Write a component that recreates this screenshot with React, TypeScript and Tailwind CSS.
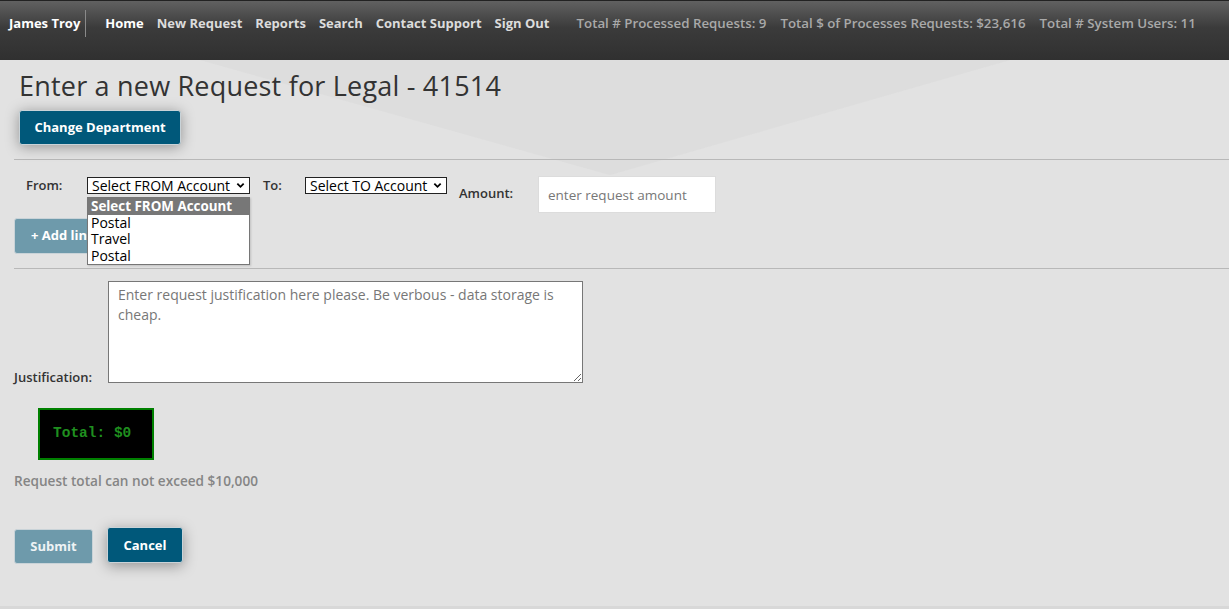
import { useState } from 'react';

const navLinks = ['New Request', 'Reports', 'Search', 'Contact Support', 'Sign Out'];
const stats = [
  'Total # Processed Requests: 9',
  'Total $ of Processes Requests: $23,616',
  'Total # System Users: 11',
];
const fromOptions = ['Postal', 'Travel', 'Postal'];

function Chevron() {
  return (
    <svg className="w-[9px] h-[9px]" viewBox="0 0 10 10" fill="none" stroke="#000" strokeWidth={2}>
      <path d="M1.5 3l3.5 3.5L8.5 3" />
    </svg>
  );
}

export default function App() {
  const [amount, setAmount] = useState('');
  const [note, setNote] = useState('');

  return (
    <div className="relative min-h-[609px] bg-[#e2e2e2] font-['Open_Sans',sans-serif] text-[13px] text-[#333] border-b-[3px] border-[#d8d8d8] overflow-hidden">
      {/* faint backdrop wedge */}
      <svg className="absolute left-0 top-[60px] w-full h-[140px] pointer-events-none" viewBox="0 0 1229 140" preserveAspectRatio="none">
        <polygon points="200,0 1010,0 610,115" fill="#d8d8d8" opacity="0.55" />
      </svg>

      <header className="relative h-[60px] border-t border-[#222] bg-[linear-gradient(to_bottom,#616161,#3b3b3b_45%,#303030)] flex items-start pt-[9px]">
        <div className="flex items-center h-[27px]">
          <span className="pl-[9px] pr-[5px] font-bold text-white">James Troy</span>
          <span className="h-[27px] border-l border-[#8a8a8a]" />
          <nav className="flex items-center gap-[13px] ml-[19px] font-bold text-[#dcdcdc]">
            <span className="text-white">Home</span>
            {navLinks.map(l => (
              <span key={l}>{l}</span>
            ))}
          </nav>
          <div className="flex items-center gap-[14px] ml-[27px] font-semibold text-[13.3px] text-[#a9a9a9]">
            {stats.map(s => (
              <span key={s}>{s}</span>
            ))}
          </div>
        </div>
      </header>

      <main className="relative">
        <h1 className="ml-[19px] mt-[10px] text-[27px] tracking-[0.2px] leading-[32px] text-[#333]">
          Enter a new Request for Legal - 41514
        </h1>
        <button className="ml-[19px] mt-[8px] w-[162px] h-[35px] rounded-[3px] border border-[#c9d3d8] bg-[#00587a] text-white font-bold shadow-[0_2px_14px_rgba(0,0,0,0.35)]">
          Change Department
        </button>

        <hr className="ml-[14px] mt-[14px] border-t border-[#b8b8b8]" />

        <div className="relative">
          <div className="flex items-start mt-[16px]">
            <span className="ml-[26px] w-[61px] font-semibold">From:</span>
            <div className="mt-[1px] w-[163px] h-[17px] bg-white border border-[#222] flex items-center justify-between pl-[4px] pr-[4px] text-[14px] text-black leading-none">
              <span>Select FROM Account</span>
              <Chevron />
            </div>
            <span className="ml-[13px] w-[42px] font-semibold">To:</span>
            <div className="mt-[1px] w-[142px] h-[17px] bg-white border border-[#222] flex items-center justify-between pl-[4px] pr-[4px] text-[14px] text-black leading-none">
              <span>Select TO Account</span>
              <Chevron />
            </div>
            <span className="ml-[12px] mt-[8px] w-[79px] font-semibold">Amount:</span>
            <input
              value={amount}
              onChange={e => setAmount(e.target.value)}
              placeholder="enter request amount"
              className="w-[178px] h-[37px] bg-white border border-[#dcdcdc] px-[9px] text-[13.5px] placeholder:text-[#777] outline-none"
            />
          </div>

          <button className="ml-[14px] mt-[5px] w-[150px] h-[36px] rounded-[3px] border border-[#c9d3d8] bg-[#6e9aab] text-white font-bold text-left pl-[16px]">
            + Add line item
          </button>

          {/* open select menu */}
          <div className="absolute left-[87px] top-[21px] w-[163px] bg-white border border-[#767676] text-[14px] text-black leading-[16.5px] shadow-[1px_1px_2px_rgba(0,0,0,0.15)]">
            <div className="bg-[#777] text-white font-bold text-[13.4px] pl-[3px]">Select FROM Account</div>
            {fromOptions.map((o, i) => (
              <div key={i} className="pl-[3px]">{o}</div>
            ))}
          </div>
        </div>

        <hr className="ml-[14px] mt-[14px] border-t border-[#b8b8b8]" />

        <div className="flex items-end mt-[12px]">
          <span className="ml-[14px] w-[94px] font-semibold leading-[16px] mb-[-2px]">Justification:</span>
          <textarea
            value={note}
            onChange={e => setNote(e.target.value)}
            placeholder="Enter request justification here please. Be verbous - data storage is cheap."
            className="w-[475px] h-[102px] bg-white border border-[#777] px-[9px] py-[3px] text-[14px] leading-[20px] placeholder:text-[#777] outline-none"
          />
        </div>

        <div className="ml-[38px] mt-[25px] w-[116px] h-[52px] bg-black border-2 border-[#008000] flex items-center pl-[13px] font-['Liberation_Mono',monospace] font-bold text-[14.5px] text-[#1f8f1f]">
          Total: $0
        </div>

        <p className="ml-[14px] mt-[11px] font-semibold text-[13.6px] text-[#858585]">Request total can not exceed $10,000</p>

        <div className="flex items-start gap-[14px] ml-[14px] mt-[36px]">
          <button className="mt-[2px] w-[79px] h-[35px] rounded-[3px] border border-[#c9d3d8] bg-[#6e9aab] text-[#eef3f5] font-bold">
            Submit
          </button>
          <button className="w-[76px] h-[36px] rounded-[3px] border border-[#c9d3d8] bg-[#00587a] text-white font-bold shadow-[0_3px_14px_rgba(0,0,0,0.35)]">
            Cancel
          </button>
        </div>
      </main>
    </div>
  );
}
